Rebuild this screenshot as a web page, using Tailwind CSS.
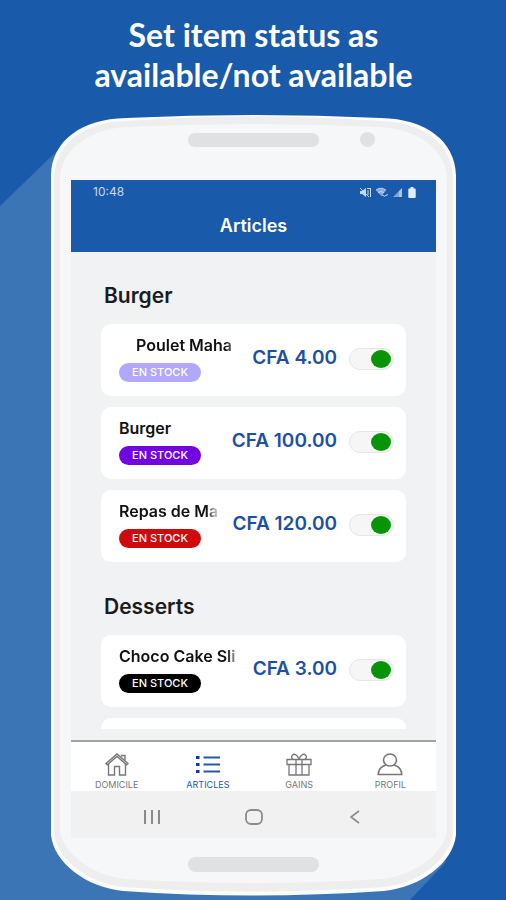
<!DOCTYPE html>
<html lang="fr">
<head>
  <meta charset="UTF-8" />
  <meta name="viewport" content="width=device-width, initial-scale=1.0" />
  <title>Articles</title>
  <script src="https://cdn.jsdelivr.net/npm/@tailwindcss/browser@4"></script>
  <style>
    body { font-family: Inter, 'Open Sans', sans-serif; }
    .fade { mask-image: linear-gradient(to right, #000 calc(100% - 14px), transparent); }
  </style>
</head>
<body class="bg-[#195aaa]">
  <div class="relative min-h-screen overflow-hidden pl-[51px] pr-[50px] pt-[15px]">
    <!-- long shadow -->
    <svg class="absolute inset-0 w-full h-full" viewBox="0 0 506 900" preserveAspectRatio="none" aria-hidden="true">
      <path d="M60 148 L0 206 V900 H410 L446 862 Z" fill="#3b75b6" />
    </svg>

    <h1 class="relative text-center text-white font-bold text-[32px] leading-10 font-['Lato'] -mx-8">Set item status as<br>available/not available</h1>

    <div class="relative mt-5 px-5 pb-6">
      <!-- phone body -->
      <svg class="absolute inset-0 w-full h-full" viewBox="0 0 405 781" preserveAspectRatio="none" aria-hidden="true">
        <path d="M0 60 C1 26 30 4 75 3 Q202 -3 330 3 C375 4 404 26 405 60 V720 C402 748 370 772 333 776 Q202 785 72 776 C35 772 3 748 0 720 Z" fill="#fbfcfc" />
        <path d="M3 62 C4 29 33 7 75 6 Q202 -3 330 6 C372 7 401 29 402 62 V718 C399 744 369 768 333 772 Q202 781 72 772 C36 768 6 744 3 718 Z" fill="#eeeeee" />
        <path d="M9 64 C10 35 37 14 77 12 Q202 6 328 12 C368 14 395 35 396 64 V716 C393 738 365 760 331 764 Q202 772 74 764 C40 760 12 738 9 716 Z" fill="#f6f7f9" />
      </svg>

      <div class="relative flex items-center justify-center h-[65px] pb-4">
        <span class="w-[131px] h-[14px] rounded-full bg-[#e0e1e1]"></span>
        <span class="absolute left-[289px] top-[17px] size-[15px] rounded-full bg-[#e0e1e1]"></span>
      </div>

      <div class="relative">
        <header class="bg-[#195aaa] text-white pb-2">
          <div class="flex items-center justify-between h-6 mb-1 pl-[22px] pr-5 text-[#c6d8ef]">
            <span class="text-xs">10:48</span>
            <div class="flex items-center gap-[3px]">
              <svg width="13" height="11" viewBox="0 0 13 11" aria-hidden="true">
                <path d="M1 4h2l4-3v9L3 7H1z" fill="currentColor" />
                <path d="M1 1l9 9M9 3v5M11.500 1v9M8 1.500h3" stroke="currentColor" fill="none" />
              </svg>
              <svg width="14" height="11" viewBox="0 0 14 11" aria-hidden="true">
                <path d="M1 3.500q4.500-4 10 0L6.500 9z" fill="currentColor" opacity=".65" />
                <path d="M1 3q4.500-3.500 10 0M3 5.500q3-2 6 0M7 8q2 2.500 6-.5" stroke="currentColor" fill="none" />
              </svg>
              <svg width="11" height="11" viewBox="0 0 11 11" aria-hidden="true">
                <path d="M1 10L7 4v6z" fill="currentColor" opacity=".6" />
                <path d="M7 4l3-3v9H7z" fill="currentColor" opacity=".85" />
              </svg>
              <svg class="ml-[2px]" width="8" height="11" viewBox="0 0 8 11" aria-hidden="true">
                <path d="M2.500 0h3v1.500H7q.7 0 .7.700v8q0 .8-.7.800H1q-.7 0-.7-.8v-8q0-.7.700-.7h1.500z" fill="#e3edf8" />
              </svg>
            </div>
          </div>
          <h2 class="text-center text-lg leading-9 font-semibold">Articles</h2>
        </header>

        <main class="bg-[#f1f2f4] pb-[11px]">
          <div class="h-[477px] overflow-hidden px-[30px] pt-[30px]">
            <section>
              <h3 class="px-[3px] mb-[14px] text-[21px] leading-7 font-semibold text-[#1b1b1d]">Burger</h3>
              <ul class="flex flex-col gap-[11px]">
                <li class="flex items-center bg-white rounded-[10px] pl-[18px] pr-3 pt-[11px] pb-[14px]">
                  <div class="flex-1 min-w-0">
                    <p class="fade pl-[17px] text-base leading-5 font-semibold text-[#111] whitespace-nowrap overflow-hidden">Poulet Maha</p>
                    <span class="block w-[82px] mt-2 rounded-full bg-[#b1a8fb] text-center text-white text-[11px] leading-[19px] font-medium">EN STOCK</span>
                  </div>
                  <span class="ml-3 text-[19px] font-semibold text-[#1d4fa5]">CFA 4.00</span>
                  <input type="checkbox" checked aria-label="Poulet Maha disponible" class="appearance-none ml-3 w-[45px] h-[22px] rounded-full border border-[#e6e6e6] bg-[#f6f6f6] flex items-center px-[2px] before:block before:w-5 before:h-[18px] before:rounded-[50%] before:bg-[#999] checked:justify-end checked:before:bg-[#079507]">
                </li>
                <li class="flex items-center bg-white rounded-[10px] pl-[18px] pr-3 pt-[11px] pb-[14px]">
                  <div class="flex-1 min-w-0">
                    <p class="text-base leading-5 font-semibold text-[#111] whitespace-nowrap overflow-hidden">Burger</p>
                    <span class="block w-[82px] mt-2 rounded-full bg-[#7104df] text-center text-white text-[11px] leading-[19px] font-medium">EN STOCK</span>
                  </div>
                  <span class="ml-3 text-[19px] font-semibold text-[#1d4fa5]">CFA 100.00</span>
                  <input type="checkbox" checked aria-label="Burger disponible" class="appearance-none ml-3 w-[45px] h-[22px] rounded-full border border-[#e6e6e6] bg-[#f6f6f6] flex items-center px-[2px] before:block before:w-5 before:h-[18px] before:rounded-[50%] before:bg-[#999] checked:justify-end checked:before:bg-[#079507]">
                </li>
                <li class="flex items-center bg-white rounded-[10px] pl-[18px] pr-3 pt-[11px] pb-[14px]">
                  <div class="flex-1 min-w-0">
                    <p class="fade text-base leading-5 font-semibold text-[#111] whitespace-nowrap overflow-hidden">Repas de Ma</p>
                    <span class="block w-[82px] mt-2 rounded-full bg-[#ce0a0d] text-center text-white text-[11px] leading-[19px] font-medium">EN STOCK</span>
                  </div>
                  <span class="ml-3 text-[19px] font-semibold text-[#1d4fa5]">CFA 120.00</span>
                  <input type="checkbox" checked aria-label="Repas disponible" class="appearance-none ml-3 w-[45px] h-[22px] rounded-full border border-[#e6e6e6] bg-[#f6f6f6] flex items-center px-[2px] before:block before:w-5 before:h-[18px] before:rounded-[50%] before:bg-[#999] checked:justify-end checked:before:bg-[#079507]">
                </li>
              </ul>
            </section>

            <section class="mt-[31px]">
              <h3 class="px-[3px] mb-[14px] text-[21px] leading-7 font-semibold text-[#1b1b1d]">Desserts</h3>
              <ul class="flex flex-col gap-[11px]">
                <li class="flex items-center bg-white rounded-[10px] pl-[18px] pr-3 pt-[11px] pb-[14px]">
                  <div class="flex-1 min-w-0">
                    <p class="fade text-base leading-5 font-semibold text-[#111] whitespace-nowrap overflow-hidden">Choco Cake Sli</p>
                    <span class="block w-[82px] mt-2 rounded-full bg-black text-center text-white text-[11px] leading-[19px] font-medium">EN STOCK</span>
                  </div>
                  <span class="ml-3 text-[19px] font-semibold text-[#1d4fa5]">CFA 3.00</span>
                  <input type="checkbox" checked aria-label="Choco Cake disponible" class="appearance-none ml-3 w-[45px] h-[22px] rounded-full border border-[#e6e6e6] bg-[#f6f6f6] flex items-center px-[2px] before:block before:w-5 before:h-[18px] before:rounded-[50%] before:bg-[#999] checked:justify-end checked:before:bg-[#079507]">
                </li>
                <li class="h-[72px] bg-white rounded-[10px]"></li>
              </ul>
            </section>
          </div>
        </main>

        <nav class="grid grid-cols-4 border-t-2 border-[#a3a3a5] bg-white text-center text-[9px] leading-3 text-[#77777a] pt-[11px]">
          <a href="#" class="flex flex-col items-center gap-[3px]">
            <svg width="24" height="23" viewBox="0 0 24 23" fill="none" stroke="currentColor" stroke-width="1.400" aria-hidden="true">
              <path d="M1 10.500L12 1l11 9.500-1.300 1.300L12 3.500 2.300 11.800z" />
              <path d="M3.500 11v11h6v-8.500h5V22h6V11M16.500 3.500V2.500h3.500v5" />
            </svg>
            DOMICILE
          </a>
          <a href="#" class="flex flex-col items-center gap-[3px] text-[#2458ad]">
            <svg width="26" height="23" viewBox="0 0 26 23" fill="none" stroke="currentColor" aria-hidden="true">
              <path d="M8.500 4.500H25M8.500 11.500H25M8.500 18.500H25" stroke-width="1.800" />
              <path d="M1 4.500h3.500M1 11.500h3.500M1 18.500h3.500" stroke="#1238a8" stroke-width="3" />
            </svg>
            ARTICLES
          </a>
          <a href="#" class="flex flex-col items-center gap-[3px]">
            <svg width="26" height="23" viewBox="0 0 26 23" fill="none" stroke="currentColor" stroke-width="1.300" aria-hidden="true">
              <path d="M1 6.500h24v5H1zM3 11.500V22h20V11.500M10 6.500V22M16 6.500V22" />
              <path d="M13 6C11 1 8 .5 6.500 2S6 5.500 7 6.500M13 6c2-5 5-5.500 6.500-4s.5 3.500-.5 4.500" />
            </svg>
            GAINS
          </a>
          <a href="#" class="flex flex-col items-center gap-[3px]">
            <svg width="26" height="23" viewBox="0 0 26 23" fill="none" stroke="currentColor" stroke-width="1.600" aria-hidden="true">
              <ellipse cx="13" cy="7" rx="6.500" ry="6" />
              <path d="M9 12C4 13.500 1.300 17 1.200 21.500h23.600C24.700 17 22 13.500 17 12" />
            </svg>
            PROFIL
          </a>
        </nav>

        <div class="grid grid-cols-[1fr_42px_1fr] items-center h-[47px] pt-1 bg-[#f1f1f1] text-[#8b8b8d]">
          <button aria-label="Applications récentes" class="flex justify-center">
            <svg width="16" height="14" viewBox="0 0 16 14" stroke="currentColor" stroke-width="2" aria-hidden="true">
              <path d="M1 0v14M8 0v14M15 0v14" />
            </svg>
          </button>
          <button aria-label="Accueil" class="flex justify-center">
            <svg width="18" height="16" viewBox="0 0 18 16" fill="none" stroke="currentColor" stroke-width="1.800" aria-hidden="true">
              <rect x="1" y="1" width="16" height="14" rx="5" />
            </svg>
          </button>
          <button aria-label="Retour" class="flex justify-center">
            <svg width="10" height="14" viewBox="0 0 10 14" fill="none" stroke="currentColor" stroke-width="1.600" aria-hidden="true">
              <path d="M9 1L1 7l8 6" />
            </svg>
          </button>
        </div>
      </div>

      <div class="relative mt-[19px] mx-auto w-[131px] h-[15px] rounded-full bg-[#e0e1e1]"></div>
    </div>
  </div>
</body>
</html>
